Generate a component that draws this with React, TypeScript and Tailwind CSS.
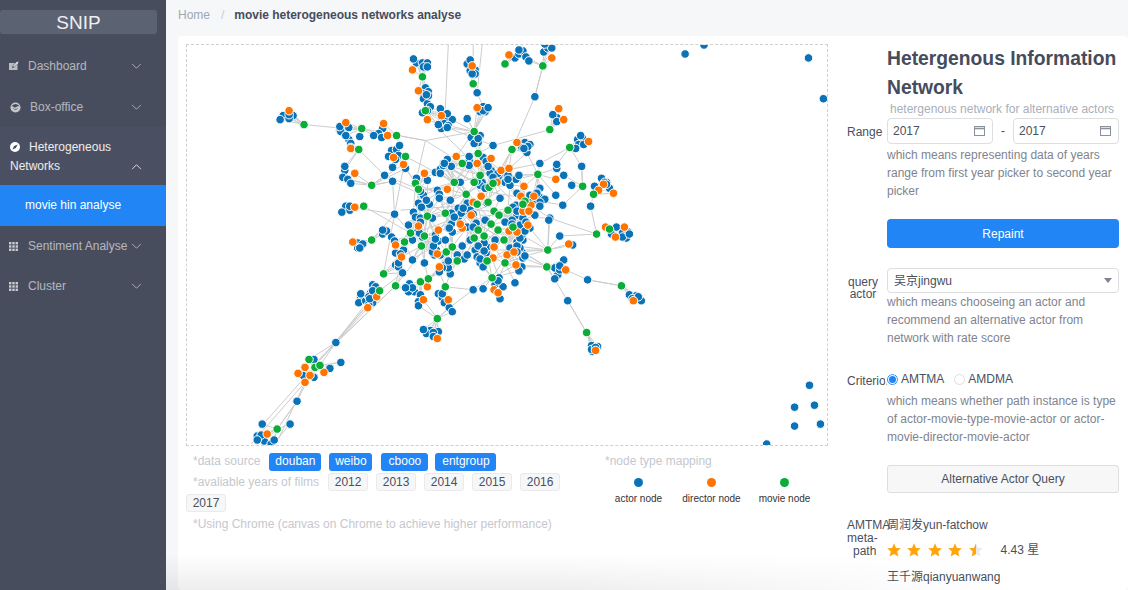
import React from 'react';

type Pt = [number, number];

const baseActors: Pt[] = [
  [416,62],[422,62],[427,62],[423,66],[467,63],[470,70],[475,69],[475,73],[477,92],[515,57],[519,53],[523,50],[526,56],
  [544,51],[548,47],[552,47],[535,96],[425,87],[428,91],[423,93],[423,98],[427,103],[430,106],[422,112],[440,108],[442,118],
  [447,117],[452,119],[444,123],[448,125],[441,128],[467,118],[483,106],[480,111],[485,111],[471,137],[477,139],[480,135],
  [478,142],[493,145],[525,142],[530,144],[527,152],[522,147],[557,117],[553,114],[578,139],[583,138],[579,144],[584,144],
  [540,163],[582,166],[557,168],[564,175],[572,185],[595,186],[602,178],[607,182],[610,188],[591,206],[563,205],[550,218],
  [560,236],[617,227],[623,233],[629,232],[627,238],[612,234],[343,127],[348,127],[339,130],[382,128],[378,133],[373,135],
  [348,139],[359,136],[350,143],[391,150],[396,149],[388,156],[398,155],[405,168],[392,167],[384,175],[344,170],[342,177],
  [347,179],[392,181],[416,178],[427,180],[423,195],[437,190],[439,194],[435,172],[440,169],[443,163],[447,159],[451,166],
  [469,160],[469,165],[483,157],[487,166],[491,170],[500,175],[508,175],[505,182],[516,179],[460,182],[540,188],[345,206],
  [349,210],[341,212],[394,214],[413,212],[418,203],[422,207],[429,204],[415,217],[420,218],[458,208],[458,217],[467,203],
  [476,223],[486,220],[517,215],[516,205],[523,218],[535,215],[540,197],[545,199],[540,202],[530,195],[517,193],[556,195],
  [448,228],[467,227],[487,203],[357,243],[362,244],[357,248],[382,234],[386,231],[391,237],[417,232],[422,237],[438,241],
  [432,248],[434,255],[462,246],[457,255],[464,259],[395,253],[403,250],[412,260],[424,263],[395,265],[398,267],[402,273],
  [409,284],[414,292],[408,292],[420,295],[418,302],[450,274],[445,265],[448,268],[442,268],[438,294],[442,298],[444,303],
  [449,308],[473,290],[483,289],[430,331],[426,334],[438,332],[433,333],[499,278],[495,285],[503,287],[500,299],[515,283],
  [522,267],[523,258],[480,263],[483,267],[522,252],[486,253],[487,247],[477,250],[517,242],[523,240],[522,235],[549,220],
  [573,245],[564,260],[558,275],[555,268],[560,270],[588,280],[630,295],[637,296],[642,301],[568,301],[592,346],[598,347],
  [593,352],[372,285],[375,287],[370,293],[360,298],[358,303],[365,301],[368,297],[372,303],[335,343],[340,363],[313,360],
  [313,378],[302,376],[329,369],[296,402],[261,425],[289,425],[256,437],[263,442],[270,445],[260,436],[686,53],[705,44],
  [810,57],[825,98],[811,386],[796,408],[816,406],[796,427],[822,425],[768,445],[282,115],[292,115],[288,118],
  // dense centre of the graph
  [440,173],[451,213],[432,218],[436,250],[440,255],[435,235],[485,220],[475,250],[480,247],[487,247],[477,257],[498,177],
  [510,185],[490,173],[482,182],[480,185],[485,188],[512,220],[520,225],[517,242],[510,248],[520,248],[513,207],[463,212],
  [532,202],[470,210],[445,240],[452,232],[505,222],[495,240],[470,240],[450,200],[500,198],[408,225],[412,240],[530,228],
];

const directors: Pt[] = [
  [412,69],[472,65],[509,54],[552,57],[418,90],[427,119],[441,115],[477,107],[517,142],[559,108],[564,119],[589,141],[556,179],
  [604,184],[599,190],[614,193],[606,227],[625,227],[616,237],[345,122],[383,123],[387,135],[350,148],[393,157],[403,164],
  [354,173],[424,173],[447,189],[456,156],[477,163],[491,158],[501,170],[509,168],[481,196],[524,186],[354,207],[471,215],
  [418,226],[462,228],[460,224],[438,230],[521,196],[534,196],[531,205],[523,211],[529,211],[528,225],[473,202],[497,182],
  [352,242],[395,245],[437,254],[401,257],[427,287],[423,300],[439,267],[448,300],[437,339],[494,290],[498,293],[516,265],
  [493,258],[507,255],[514,252],[494,247],[509,231],[517,232],[569,244],[566,270],[634,301],[596,351],[376,297],[367,308],
  [304,368],[297,374],[309,376],[323,373],[304,383],[266,435],[288,110],
];

const movies: Pt[] = [
  [422,76],[473,83],[505,63],[543,65],[425,110],[474,131],[478,153],[512,149],[550,129],[570,147],[538,174],[583,186],[594,194],
  [597,234],[610,229],[361,128],[396,135],[358,149],[405,156],[371,185],[415,183],[418,189],[454,182],[462,163],[480,175],
  [474,182],[489,187],[493,183],[466,194],[363,206],[477,204],[488,202],[525,201],[523,204],[494,211],[499,215],[508,210],
  [445,213],[427,216],[491,224],[498,230],[478,230],[484,236],[474,238],[513,227],[424,236],[410,233],[371,240],[404,242],
  [421,246],[446,252],[452,247],[457,261],[383,274],[395,286],[420,282],[428,279],[445,287],[437,319],[492,278],[505,263],
  [487,261],[504,240],[548,250],[547,267],[622,286],[587,333],[379,291],[308,360],[314,368],[319,366],[276,430],[303,124],
];

// long links that the nearest-movie rule below does not produce
const extraEdges: [number, number, number, number][] = [
  [448,44,445,108],[473,44,473,83],[482,44,477,92],[467,118,474,131],[535,96,512,149],[543,65,535,96],[493,145,550,129],
  [493,145,427,119],[540,163,570,147],[540,163,480,175],[582,166,583,186],[570,147,582,166],[591,206,597,234],[563,205,480,190],
  [550,218,548,250],[560,236,597,234],[550,218,597,234],[548,250,477,250],[547,267,568,301],[568,301,587,333],[547,267,480,225],
  [588,280,622,286],[566,270,588,280],[395,286,335,343],[335,343,262,425],[379,291,314,366],[395,286,316,362],[340,363,319,366],
  [335,343,308,360],[304,383,250,445],[304,383,275,445],[309,376,296,402],[296,402,276,430],[289,425,272,445],[303,124,345,128],
  [361,128,425,140],[396,135,425,140],[425,140,415,183],[425,140,474,131],[425,140,462,163],[449,308,473,290],[473,290,445,287],
  [437,319,449,308],[437,319,423,300],[483,289,492,278],[395,286,470,190],[384,175,418,189],[392,181,423,195],[392,181,394,214],
  [394,214,383,274],[371,240,394,214],[345,206,394,214],[363,206,410,233],[371,185,392,181],[358,149,384,175],[405,156,394,214],
  [440,130,512,200],[478,153,445,213],[478,153,520,200],[512,149,480,205],[430,190,510,240],[420,240,500,190],[450,170,498,230],
  [396,240,490,205],[410,260,500,210],[460,260,480,190],[520,250,440,200],[550,218,480,215],[450,270,510,205],[492,278,477,200],
  [400,210,470,205],[405,222,475,202],[405,225,480,206],[335,343,379,291],[337,341,381,293],[333,345,377,289],
];

const sq = (a: Pt, b: Pt) => (a[0] - b[0]) ** 2 + (a[1] - b[1]) ** 2;

// packed groups get a few more nodes, which gives the ragged rings of the overlap
const actors: Pt[] = [
  ...baseActors,
  ...baseActors
    .filter((p, i) => i % 2 === 0 && baseActors.some((q) => q !== p && sq(p, q) < 100))
    .map((p, i): Pt => [p[0] + (i % 3) * 3 - 3, p[1] + (i % 2 === 0 ? -4 : 4)]),
];

// every person links to the movies closest to it
function buildEdges(): [number, number, number, number][] {
  const edges: [number, number, number, number][] = [...extraEdges];
  [...actors, ...directors].forEach((p) => {
    const sorted = [...movies].sort((a, b) => sq(a, p) - sq(b, p));
    if (sq(sorted[0], p) < 90 * 90) edges.push([p[0], p[1], sorted[0][0], sorted[0][1]]);
    if (p[1] > 150 && p[1] < 280 && p[0] > 400 && p[0] < 540) {
      edges.push([p[0], p[1], sorted[1][0], sorted[1][1]]);
      edges.push([p[0], p[1], sorted[4][0], sorted[4][1]]);
    }
  });
  return edges;
}

function NetworkGraph() {
  const edges = buildEdges();
  const dot = (list: Pt[], fill: string) =>
    list.map((p, i) => <circle key={fill + i} cx={p[0]} cy={p[1]} r={4.3} fill={fill} stroke="#fff" strokeWidth={1} />);
  return (
    <svg viewBox="186 44 642 402" className="block w-full h-full">
      {edges.map((e, i) => (
        <line key={i} x1={e[0]} y1={e[1]} x2={e[2]} y2={e[3]} stroke="#cccccc" strokeWidth={1} />
      ))}
      {dot(actors, '#0a73b8')}
      {dot(directors, '#ff7300')}
      {dot(movies, '#0bac38')}
    </svg>
  );
}

function Chevron({ up }: { up?: boolean }) {
  return (
    <svg viewBox="0 0 12 8" className="w-[11px] h-[7px] shrink-0" fill="none" stroke="currentColor" strokeWidth={1}>
      <path d={up ? 'M1 7 L6 2 L11 7' : 'M1 1 L6 6 L11 1'} />
    </svg>
  );
}

function ComposeIcon() {
  return (
    <svg viewBox="0 0 10 10" className="w-[10px] h-[10px] shrink-0">
      <path d="M0 2 H6 L3.5 5 L3 7 L5 6.4 L8.5 3 V9 H0 Z" fill="#b9bcc4" />
      <path d="M7.5 1 L9.5 0.5 L9 2.5 L5 6 L4 5 Z" fill="#d5d7dc" />
    </svg>
  );
}

function WaveIcon() {
  return (
    <svg viewBox="0 0 12 12" className="w-[11px] h-[11px] shrink-0">
      <circle cx="6" cy="6" r="5.5" fill="#c5c7cd" />
      <path d="M1.5 5 C3 3.4 4.5 6.6 6 6 C7.5 5.4 9 3.4 10.5 5 A5 5 0 0 0 1.5 5 Z" fill="#484d5e" />
      <path d="M3.4 6.6 C4.6 8 7.4 8 8.6 6.6 C8.2 9 3.8 9 3.4 6.6 Z" fill="#484d5e" />
    </svg>
  );
}

function CompassIcon() {
  return (
    <svg viewBox="0 0 10 10" className="w-[10px] h-[10px] shrink-0">
      <circle cx="5" cy="5" r="5" fill="#fff" />
      <path d="M7.6 2.4 L5.9 5.9 L2.4 7.6 L4.1 4.1 Z" fill="#484d5e" />
    </svg>
  );
}

function GridIcon() {
  return (
    <svg viewBox="0 0 9 9" className="w-[9px] h-[9px] shrink-0 mr-px" fill="#c9cbd1">
      {[0, 3.3, 6.6].map((y) =>
        [0, 3.3, 6.6].map((x) => <rect key={`${x}-${y}`} x={x} y={y} width={2.4} height={2.4} />),
      )}
    </svg>
  );
}

function CalendarIcon() {
  return (
    <svg viewBox="0 0 11 10" className="w-[11px] h-[10px] shrink-0" fill="none" stroke="#8a919d">
      <rect x="0.5" y="0.5" width="10" height="9" />
      <path d="M0.5 2.5 H10.5" strokeWidth={1.6} />
    </svg>
  );
}

function Star({ half }: { half?: boolean }) {
  const d = 'M7 0.3 L9 4.9 L13.9 5.3 L10.2 8.6 L11.3 13.5 L7 10.9 L2.7 13.5 L3.8 8.6 L0.1 5.3 L5 4.9 Z';
  return (
    <svg viewBox="0 0 14 14" className="w-[14px] h-[14px]">
      <path d={d} fill={half ? '#e9eaec' : '#ffa40a'} />
      {half && <path d="M7 0.3 L5 4.9 L0.1 5.3 L3.8 8.6 L2.7 13.5 L7 10.9 Z" fill="#ffa40a" />}
    </svg>
  );
}

function MenuItem({ icon, label }: { icon: React.ReactNode; label: string }) {
  return (
    <div className="h-10 flex items-center pl-[9px] pr-[24px] text-white/60">
      {icon}
      <span className="ml-[9px] flex-1 whitespace-nowrap">{label}</span>
      <Chevron />
    </div>
  );
}

function DateBox() {
  return (
    <div className="w-[106px] h-[26px] border border-[#dddee1] rounded-[4px] flex items-center justify-between pl-[5px] pr-[7px] text-[#495060]">
      2017
      <CalendarIcon />
    </div>
  );
}

function Tag({ label, blue, className }: { label: string; blue?: boolean; className?: string }) {
  return blue ? (
    <span className={`inline-block h-[18px] leading-[16px] text-center rounded-[3px] bg-[#2185f5] text-white ${className ?? ''}`}>{label}</span>
  ) : (
    <span className="inline-block h-[18px] w-[40px] text-center leading-[16px] mr-[8px] rounded-[3px] bg-[#f7f7f7] border border-[#e9eaec] text-[#495060]">{label}</span>
  );
}

function FormRow({ label, children, className }: { label: React.ReactNode; children: React.ReactNode; className?: string }) {
  return (
    <div className={`flex ${className ?? ''}`}>
      <div className="w-[57px] shrink-0 pl-[17px] text-[#495060] whitespace-nowrap">{label}</div>
      <div className="w-[232px] shrink-0">{children}</div>
    </div>
  );
}

function Hint({ children }: { children: React.ReactNode }) {
  return <p className="text-[#80848f] leading-[18px]">{children}</p>;
}

export default function App() {
  return (
    <div className="relative w-[1128px] h-[590px] overflow-hidden flex bg-[#f5f7f9] text-[12px] font-['Liberation_Sans','Noto_Sans_CJK_SC',sans-serif]">
      <aside className="w-[166px] shrink-0 bg-[#484d5e]">
        <div className="pt-[10px] pr-[9px] h-[46px]">
          <div className="h-[24px] rounded-[3px] bg-[#5b6272] text-center text-[19px] leading-[26px] text-white/90">SNIP</div>
        </div>
        <MenuItem icon={<ComposeIcon />} label="Dashboard" />
        <div className="pt-px pl-px">
          <MenuItem icon={<WaveIcon />} label="Box-office" />
        </div>
        <div className="bg-[#4a4f61]">
          <div className="h-[58px] pl-[10px] pr-[24px] pt-[11px] leading-[18px] text-white/90">
            <span className="inline-flex items-center">
              <CompassIcon />
              <span className="ml-[9px]">Heterogeneous</span>
            </span>
            <div className="flex items-center justify-between">
              Networks
              <Chevron up />
            </div>
          </div>
          <div className="h-[41px] bg-[#2185f5] pl-[25px] pb-[2px] flex items-center text-white">movie hin analyse</div>
        </div>
        <MenuItem icon={<GridIcon />} label="Sentiment Analyse" />
        <MenuItem icon={<GridIcon />} label="Cluster" />
      </aside>

      <main className="flex-1 min-w-0">
        <div className="h-[36px] pl-[12px] pt-[8px] leading-[14px] whitespace-nowrap">
          <span className="text-[#9ea7b4]">Home</span>
          <span className="text-[#c8ccd3] ml-[11px] mr-[10px]">/</span>
          <span className="font-bold text-[#464c5b] tracking-[-0.02px]">movie heterogeneous networks analyse</span>
        </div>

        <div className="ml-[12px] h-[554px] bg-white rounded-[4px] pt-[8px] pl-[8px] flex">
          <section className="w-[642px] shrink-0">
            <div className="h-[402px] border border-dashed border-[#cfcfcf] overflow-hidden">
              <NetworkGraph />
            </div>
            <div className="flex pt-[5px]">
              <div className="w-[390px] shrink-0 leading-[21px] text-[#c5c8ce]">
                <div>
                  <span className="ml-[7px] mr-[9px]">*data source</span>
                  <Tag blue label="douban" className="w-[52px] mr-[8px]" />
                  <Tag blue label="weibo" className="w-[43px] mr-[9px]" />
                  <Tag blue label="cbooo" className="w-[47px] mr-[7px]" />
                  <Tag blue label="entgroup" className="w-[61px]" />
                </div>
                <div>
                  <span className="ml-[7px] mr-[9px]">*avaliable years of films</span>
                  <Tag label="2012" />
                  <Tag label="2013" />
                  <Tag label="2014" />
                  <Tag label="2015" />
                  <Tag label="2016" />
                  <Tag label="2017" />
                </div>
                <div className="ml-[7px] whitespace-nowrap">*Using Chrome (canvas on Chrome to achieve higher performance)</div>
              </div>
              <div className="ml-[29px] text-[#c5c8ce] leading-[21px]">
                *node type mapping
                <div className="flex mt-[6px] text-[10px] leading-[12px] text-[#333] ml-[-3px]">
                  {[
                    ['actor node', 'bg-[#0a73b8]'],
                    ['director node', 'bg-[#ff7300]'],
                    ['movie node', 'bg-[#0bac38]'],
                  ].map(([name, color]) => (
                    <div key={name} className="w-[73px] flex flex-col items-center">
                      <span className={`w-[9px] h-[9px] rounded-full ${color}`} />
                      <span className="mt-[6px] whitespace-nowrap">{name}</span>
                    </div>
                  ))}
                </div>
              </div>
            </div>
          </section>

          <section className="shrink-0 ml-[2px]">
            <div className="pl-[57px] w-[295px]">
              <h1 className="text-[19.3px] font-bold leading-[29px] text-[#464c5b]">Hetergenous Information Network</h1>
              <p className="pl-[3px] leading-[14px] text-[#a9afbb] whitespace-nowrap">hetergenous network for alternative actors</p>
            </div>
            <FormRow label={<div className="pt-[7px] leading-[12px]">Range</div>} className="mt-[3px]">
              <div className="flex items-center justify-between -mt-px">
                <DateBox />
                <span className="text-[#495060]">-</span>
                <DateBox />
              </div>
              <div className="mt-[2px]">
                <Hint>which means representing data of years range from first year picker to second year picker</Hint>
              </div>
              <button className="mt-[19px] w-full h-[29px] rounded-[4px] bg-[#2185f5] text-white">Repaint</button>
            </FormRow>
            <FormRow label={<div className="text-center w-[40px] -ml-[4px] pt-[8px] leading-[12px]">query<br />actor</div>} className="mt-[20px]">
              <div className="h-[25px] border border-[#dddee1] rounded-[4px] flex items-center justify-between pl-[6px] pr-[6px] text-[#495060]">
                吴京jingwu
                <span className="w-0 h-0 border-x-[4.5px] border-x-transparent border-t-[5px] border-t-[#80848f]" />
              </div>
              <Hint>which means chooseing an actor and recommend an alternative actor from network with rate score</Hint>
            </FormRow>
            <FormRow label={<div className="pt-[5px] leading-[12px]">Criterion</div>} className="mt-[23px]">
              <div className="flex items-center h-[18px] text-[#495060]">
                <span className="relative w-[11px] h-[11px] rounded-full border border-[#2185f5] bg-white flex items-center justify-center outline-2 outline-white">
                  <span className="w-[7px] h-[7px] rounded-full bg-[#2185f5]" />
                </span>
                <span className="ml-[3px]">AMTMA</span>
                <span className="ml-[10px] w-[11px] h-[11px] rounded-full border border-[#dddee1]" />
                <span className="ml-[3px]">AMDMA</span>
              </div>
              <div className="mt-[4px]">
                <Hint>which means whether path instance is type of actor-movie-type-movie-actor or actor-movie-director-movie-actor</Hint>
              </div>
              <button className="mt-[19px] w-full h-[28px] rounded-[3px] bg-[#f7f7f7] border border-[#dddee1] text-[#495060]">Alternative Actor Query</button>
            </FormRow>
            <FormRow label={<div className="leading-[13px] pt-[1px]">AMTMA<br />meta-<br /><span className="ml-[6px]">path</span></div>} className="mt-[25px]">
              <div className="text-[#495060] leading-[14px]">周润发yun-fatchow</div>
              <div className="flex items-center mt-[11px] h-[14px]">
                <div className="flex gap-[6.4px]">
                  <Star />
                  <Star />
                  <Star />
                  <Star />
                  <Star half />
                </div>
                <span className="ml-[18px] text-[#495060]">4.43 星</span>
              </div>
              <div className="text-[#495060] leading-[14px] mt-[13px]">王千源qianyuanwang</div>
            </FormRow>
          </section>
        </div>
      </main>

      {/* soft shadow fading in along the bottom edge */}
      <div className="absolute left-[166px] bottom-0 w-[840px] h-[36px] bg-gradient-to-b from-transparent to-[#000]/[0.07] pointer-events-none [mask-image:linear-gradient(to_right,black_45%,transparent)]" />
    </div>
  );
}
